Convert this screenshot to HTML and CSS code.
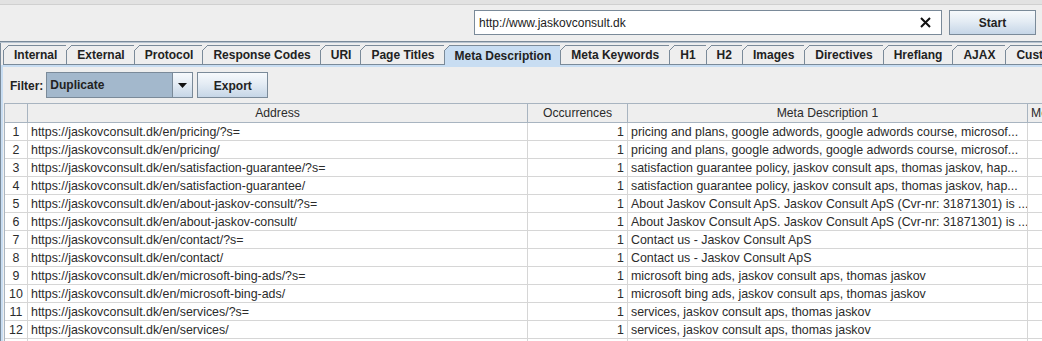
FILE: index.html
```html
<!DOCTYPE html>
<html>
<head>
<meta charset="utf-8">
<link rel="stylesheet" href="styles.css">
</head>
<body>
<div class="topstrip"></div>
<div class="urlbar">
  <div class="url">
    <span class="url-text">http://www.jaskovconsult.dk</span>
    <svg class="clear" width="11" height="11" viewBox="0 0 11 11"><path d="M1 1 L10 10 M10 1 L1 10" stroke="#111" stroke-width="2" fill="none"/></svg>
  </div>
  <div class="btn start">Start</div>
</div>
<div class="divider"></div>
<div class="pane">
  <div class="tabs">
    <div class="tab">Internal</div>
    <div class="tab">External</div>
    <div class="tab">Protocol</div>
    <div class="tab">Response Codes</div>
    <div class="tab">URI</div>
    <div class="tab">Page Titles</div>
    <div class="tab selected">Meta Description</div>
    <div class="tab">Meta Keywords</div>
    <div class="tab">H1</div>
    <div class="tab">H2</div>
    <div class="tab">Images</div>
    <div class="tab">Directives</div>
    <div class="tab">Hreflang</div>
    <div class="tab">AJAX</div>
    <div class="tab">Custom</div>
  </div>
  <div class="content">
    <div class="filter">
      <span class="filter-label">Filter:</span>
      <div class="combo">
        <span class="combo-value">Duplicate</span>
        <div class="combo-arrow"><svg width="9" height="5" viewBox="0 0 9 5"><path d="M0 0 H9 L4.5 5 Z" fill="#111"/></svg></div>
      </div>
      <div class="btn export">Export</div>
    </div>
    <div class="table">
      <div class="row head">
        <div class="c num"></div>
        <div class="c addr">Address</div>
        <div class="c occ">Occurrences</div>
        <div class="c meta">Meta Description 1</div>
        <div class="c last">Meta Description 1 Length</div>
      </div>
      <div class="row"><div class="c num">1</div><div class="c addr">https://jaskovconsult.dk/en/pricing/?s=</div><div class="c occ">1</div><div class="c meta">pricing and plans, google adwords, google adwords course, microsof...</div><div class="c last"></div></div>
      <div class="row"><div class="c num">2</div><div class="c addr">https://jaskovconsult.dk/en/pricing/</div><div class="c occ">1</div><div class="c meta">pricing and plans, google adwords, google adwords course, microsof...</div><div class="c last"></div></div>
      <div class="row"><div class="c num">3</div><div class="c addr">https://jaskovconsult.dk/en/satisfaction-guarantee/?s=</div><div class="c occ">1</div><div class="c meta">satisfaction guarantee policy, jaskov consult aps, thomas jaskov, hap...</div><div class="c last"></div></div>
      <div class="row"><div class="c num">4</div><div class="c addr">https://jaskovconsult.dk/en/satisfaction-guarantee/</div><div class="c occ">1</div><div class="c meta">satisfaction guarantee policy, jaskov consult aps, thomas jaskov, hap...</div><div class="c last"></div></div>
      <div class="row"><div class="c num">5</div><div class="c addr">https://jaskovconsult.dk/en/about-jaskov-consult/?s=</div><div class="c occ">1</div><div class="c meta">About Jaskov Consult ApS. Jaskov Consult ApS (Cvr-nr: 31871301) is ...</div><div class="c last"></div></div>
      <div class="row"><div class="c num">6</div><div class="c addr">https://jaskovconsult.dk/en/about-jaskov-consult/</div><div class="c occ">1</div><div class="c meta">About Jaskov Consult ApS. Jaskov Consult ApS (Cvr-nr: 31871301) is ...</div><div class="c last"></div></div>
      <div class="row"><div class="c num">7</div><div class="c addr">https://jaskovconsult.dk/en/contact/?s=</div><div class="c occ">1</div><div class="c meta">Contact us - Jaskov Consult ApS</div><div class="c last"></div></div>
      <div class="row"><div class="c num">8</div><div class="c addr">https://jaskovconsult.dk/en/contact/</div><div class="c occ">1</div><div class="c meta">Contact us - Jaskov Consult ApS</div><div class="c last"></div></div>
      <div class="row"><div class="c num">9</div><div class="c addr">https://jaskovconsult.dk/en/microsoft-bing-ads/?s=</div><div class="c occ">1</div><div class="c meta">microsoft bing ads, jaskov consult aps, thomas jaskov</div><div class="c last"></div></div>
      <div class="row"><div class="c num">10</div><div class="c addr">https://jaskovconsult.dk/en/microsoft-bing-ads/</div><div class="c occ">1</div><div class="c meta">microsoft bing ads, jaskov consult aps, thomas jaskov</div><div class="c last"></div></div>
      <div class="row"><div class="c num">11</div><div class="c addr">https://jaskovconsult.dk/en/services/?s=</div><div class="c occ">1</div><div class="c meta">services, jaskov consult aps, thomas jaskov</div><div class="c last"></div></div>
      <div class="row"><div class="c num">12</div><div class="c addr">https://jaskovconsult.dk/en/services/</div><div class="c occ">1</div><div class="c meta">services, jaskov consult aps, thomas jaskov</div><div class="c last"></div></div>
      <div class="row"><div class="c num"></div><div class="c addr"></div><div class="c occ"></div><div class="c meta"></div><div class="c last"></div></div>
    </div>
  </div>
</div>
</body>
</html>
```

FILE: styles.css
```css
html, body {
  margin: 0;
  padding: 0;
}
body {
  width: 1042px;
  height: 341px;
  overflow: hidden;
  background: #eeeeee;
  font-family: "Liberation Sans", Arial, sans-serif;
  font-size: 12px;
  color: #2b2b2b;
}
.topstrip {
  height: 4px;
  background: #e2e2e2;
  border-bottom: 1px solid #d0d0d0;
}
.urlbar {
  display: flex;
  justify-content: flex-end;
  gap: 7px;
  padding: 5px 6px 6px 0;
}
.url {
  box-sizing: border-box;
  width: 468px;
  height: 25px;
  border: 1px solid #7a8a99;
  background: #ffffff;
  display: flex;
  align-items: center;
  padding-left: 4px;
}
.url-text {
  color: #222;
}
.clear {
  margin-left: auto;
  margin-right: 10px;
}
.btn {
  box-sizing: border-box;
  border: 1px solid #7a8a99;
  background: linear-gradient(#f6f9fc, #e4ecf4 45%, #c6d6e7);
  display: flex;
  align-items: center;
  justify-content: center;
  font-weight: bold;
  color: #222;
}
.start {
  width: 87px;
  height: 25px;
}
.divider {
  height: 1px;
  background: #7a8a99;
  border-bottom: 1px solid #b8c4d0;
}
.pane {
  border-left: 1px solid #7a8a99;
}
.tabs {
  display: flex;
  padding: 2px 0 0 2px;
  white-space: nowrap;
  overflow: hidden;
}
.tab {
  position: relative;
  box-sizing: border-box;
  height: 20px;
  padding: 0 9px 0 10px;
  border-top: 1px solid #7a8a99;
  border-left: 1px solid #7a8a99;
  border-bottom: 1px solid #7a8a99;
  background: #eeeeee;
  font-weight: bold;
  color: #222;
  display: flex;
  align-items: center;
  flex: none;
}
.selected ~ .tab {
  padding-right: 10px;
}
.tab::before {
  content: "";
  position: absolute;
  top: -1px;
  left: -1px;
  width: 6px;
  height: 6px;
  background: linear-gradient(to bottom right, #eeeeee calc(50% - 0.6px), #7a8a99 50%, transparent calc(50% + 0.6px));
}
.tab.selected {
  background: #c8ddf2;
  border-bottom: none;
}
.content {
  border-top: 2px solid #c8ddf2;
  border-left: 2px solid #c8ddf2;
}
.filter {
  display: flex;
  align-items: center;
  padding: 5px 0 0 7px;
}
.filter-label {
  font-weight: bold;
  color: #222;
  margin-right: 3px;
  padding-top: 1px;
}
.combo {
  box-sizing: border-box;
  width: 147px;
  height: 26px;
  border: 1px solid #7a8a99;
  background: #a3b8cc;
  display: flex;
  align-items: stretch;
}
.combo-value {
  flex: 1;
  display: flex;
  align-items: center;
  padding-left: 3px;
  padding-bottom: 1px;
  font-weight: bold;
  color: #222;
}
.combo-arrow {
  width: 19px;
  border-left: 1px solid #7a8a99;
  background: linear-gradient(#f6f9fc, #e4ecf4 45%, #c6d6e7);
  display: flex;
  align-items: center;
  justify-content: center;
}
.export {
  width: 71px;
  height: 26px;
  margin-left: 4px;
  padding-top: 1px;
}
.table {
  margin: 5px 0 0 1px;
  border-left: 1px solid #a8b4c0;
  background: #ffffff;
}
.row {
  display: grid;
  grid-template-columns: 23px 500px 100px 400px 100px;
  height: 18px;
  font-size: 12.4px;
}
.c {
  box-sizing: border-box;
  height: 18px;
  border-right: 1px solid #d6d6d6;
  border-bottom: 1px solid #d6d6d6;
  line-height: 18px;
  white-space: nowrap;
  overflow: hidden;
  padding: 0 3px;
}
.num {
  text-align: center;
  padding: 0;
}
.occ {
  text-align: right;
}
.row.head {
  height: 20px;
  background: #eeeeee;
  font-size: 12.2px;
}
.head .c {
  height: 20px;
  border-top: 1px solid #a8b4c0;
  border-bottom: 1px solid #a8b4c0;
  border-right: 1px solid #a8b4c0;
  line-height: 19px;
  text-align: center;
}
.head .last {
  text-align: left;
}
```
